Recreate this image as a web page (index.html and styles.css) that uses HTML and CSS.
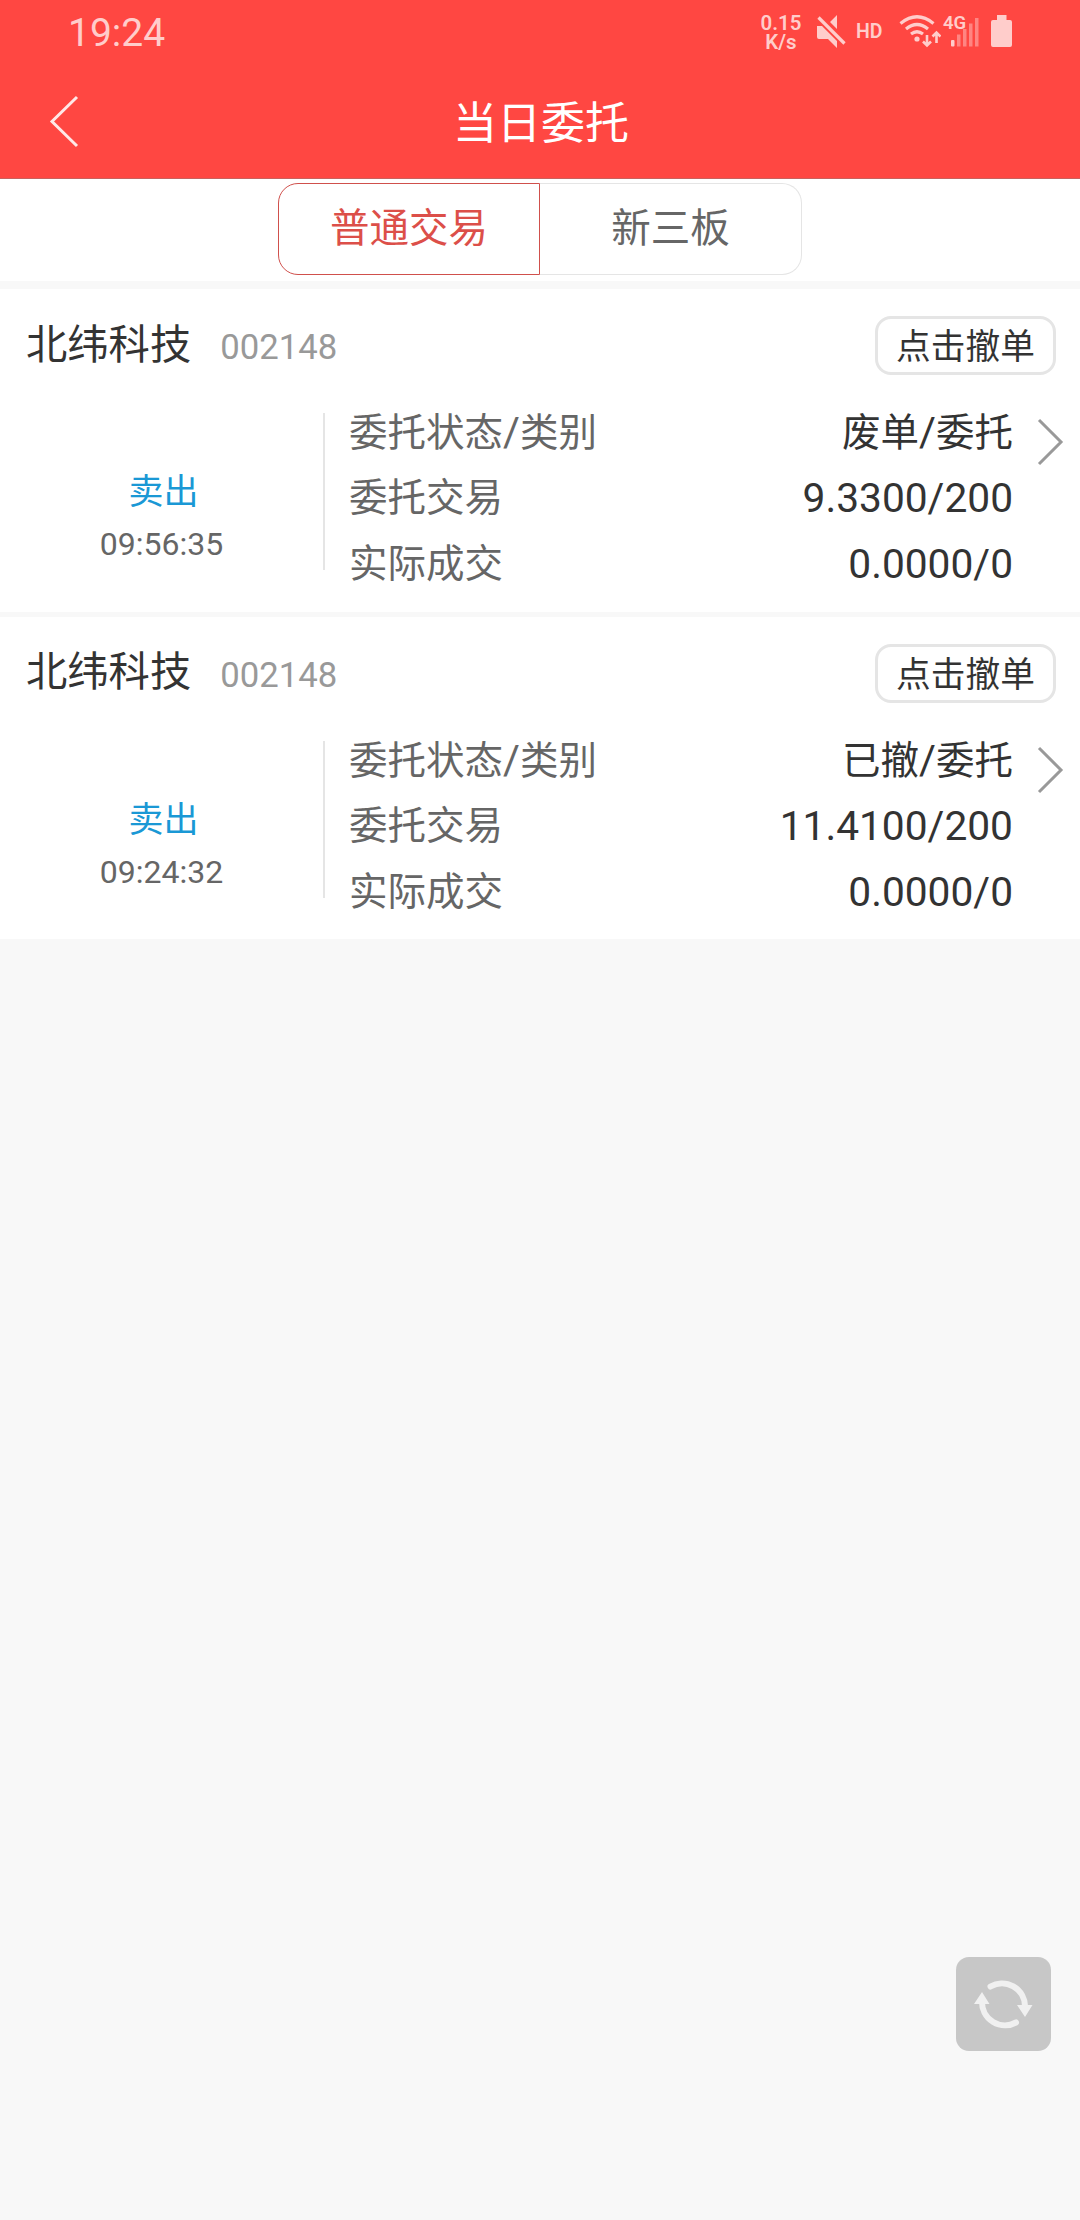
FILE: index.html
```html
<!DOCTYPE html>
<html lang="zh-CN">
<head>
  <meta charset="UTF-8">
  <title>当日委托</title>
  <link rel="stylesheet" href="styles.css">
</head>
<body>
  <header class="header">
    <div class="status-bar">
      <span class="clock">19:24</span>
      <div class="status-icons">
        <div class="net-speed">
          <span>0.15</span>
          <span>K/s</span>
        </div>
        <svg class="icon-mute" width="30" height="34" viewBox="0 0 30 34">
          <path d="M1 12h5l15 15v7l-9-9H3q-2 0-2-2z M14 8l7-7v14z"/>
          <path class="line" d="M2.5 3.500L28.500 29.500"/>
        </svg>
        <span class="hd">HD</span>
        <svg class="icon-wifi" width="42" height="34" viewBox="0 0 42 34">
          <path class="line" d="M1.500 9.500Q18 -4 34.500 9.500M7 15Q18 6 29 15M12 20Q18 15.500 24 20"/>
          <circle cx="18" cy="25" r="2.600"/>
          <path class="arrow" d="M28 21v10M24 27.500l4 4 4-4M37.500 29V19M33.500 22.500l4-4 4 4"/>
        </svg>
        <div class="signal">
          <span class="network">4G</span>
          <svg width="37" height="34" viewBox="0 0 37 34">
            <rect x="8" y="26" width="3.500" height="6.500" rx="1"/>
            <path class="dim" d="M14 20.500h3.500v12H14zM20 15h3.500v17.500H20zM26 9.500h3.500v23H26zM32 4h3.500v28.500H32z"/>
          </svg>
        </div>
        <svg class="icon-battery" width="21" height="34" viewBox="0 0 21 34">
          <path d="M6 1h9.500v5H19q2 0 2 2v23q0 2-2 2H2q-2 0-2-2V8q0-2 2-2h4z"/>
        </svg>
      </div>
    </div>
    <div class="nav-bar">
      <svg class="back" width="30" height="54" viewBox="0 0 30 54">
        <path d="M28 2L3 26.500 28 51"/>
      </svg>
      <h1 class="nav-title">当日委托</h1>
    </div>
  </header>

  <div class="tabs">
    <div class="tab active">普通交易</div>
    <div class="tab">新三板</div>
  </div>

  <div class="order-list">
    <div class="order">
      <div class="order-header">
        <span class="stock-name">北纬科技</span>
        <span class="stock-code">002148</span>
        <button class="cancel-btn">点击撤单</button>
      </div>
      <div class="order-body">
        <div class="order-side">
          <div class="side">卖出</div>
          <div class="time">09:56:35</div>
        </div>
        <div class="order-info">
          <div class="row"><span class="label">委托状态<i>/</i>类别</span><span class="value">废单<i>/</i>委托</span></div>
          <div class="row"><span class="label">委托交易</span><span class="value num">9.3300/200</span></div>
          <div class="row"><span class="label">实际成交</span><span class="value num">0.0000/0</span></div>
        </div>
        <svg class="chevron" width="28" height="48" viewBox="0 0 28 48">
          <path d="M2 2l22 22L2 46"/>
        </svg>
      </div>
    </div>

    <div class="order">
      <div class="order-header">
        <span class="stock-name">北纬科技</span>
        <span class="stock-code">002148</span>
        <button class="cancel-btn">点击撤单</button>
      </div>
      <div class="order-body">
        <div class="order-side">
          <div class="side">卖出</div>
          <div class="time">09:24:32</div>
        </div>
        <div class="order-info">
          <div class="row"><span class="label">委托状态<i>/</i>类别</span><span class="value">已撤<i>/</i>委托</span></div>
          <div class="row"><span class="label">委托交易</span><span class="value num">11.4100/200</span></div>
          <div class="row"><span class="label">实际成交</span><span class="value num">0.0000/0</span></div>
        </div>
        <svg class="chevron" width="28" height="48" viewBox="0 0 28 48">
          <path d="M2 2l22 22L2 46"/>
        </svg>
      </div>
    </div>
  </div>

  <div class="refresh-btn">
    <svg width="95" height="94" viewBox="0 0 95 94">
      <path class="arc" d="M34.500 29.500A23 23 0 0 1 69 49M60 65.500A23 23 0 0 1 26 45"/>
      <path class="head" d="M61 48h15.500L69 60zM18 47h15.500L26 35z"/>
    </svg>
  </div>
</body>
</html>
```
FILE: styles.css
```css
* {
  box-sizing: border-box;
}
body {
  margin: 0;
  width: 1080px;
  min-height: 2220px;
  background: #f8f8f8;
  font-family: Roboto, "Noto Sans CJK SC", sans-serif;
  color: #333;
}
svg {
  display: block;
}

/* header */
.header {
  height: 179px;
  background: #ff4742;
  border-bottom: 1px solid #c8625e;
}
.status-bar {
  height: 66px;
  padding: 0 68px;
  display: flex;
  justify-content: space-between;
  color: #ffcdcb;
}
.clock {
  font-size: 39px;
  line-height: 67px;
}
.status-icons {
  display: flex;
  align-items: flex-start;
  padding-top: 14px;
  font-weight: 600;
}
.status-icons svg {
  fill: #ffcdcb;
}
.status-icons .line, .status-icons .arrow {
  fill: none;
  stroke: #ffcdcb;
  stroke-width: 3.2;
}
.status-icons .arrow {
  stroke-width: 2.6;
}
.status-icons .dim {
  fill: #ff8582;
}
.net-speed {
  width: 42px;
  margin-right: 14px;
  display: flex;
  flex-direction: column;
  align-items: center;
  font-size: 20.5px;
  line-height: 19px;
}
.icon-mute {
  margin-right: 10px;
}
.hd {
  width: 27px;
  margin-right: 16px;
  font-size: 19.5px;
  line-height: 35px;
}
.icon-wifi {
  margin-right: 2px;
}
.signal {
  position: relative;
  margin-right: 11px;
}
.network {
  position: absolute;
  left: 0;
  top: 0;
  font-size: 18.5px;
  line-height: 18px;
}
.nav-bar {
  height: 112px;
  padding: 0 49px;
  display: grid;
  grid-template-columns: 30px 1fr 30px;
  align-items: center;
}
.back path {
  fill: none;
  stroke: #ffe8e7;
  stroke-width: 3;
}
.nav-title {
  margin: 0;
  padding: 3px 0 0 2px;
  text-align: center;
  font-size: 44px;
  font-weight: 400;
  line-height: 64px;
  color: #fff;
}

/* tabs */
.tabs {
  height: 102px;
  padding-top: 4px;
  display: flex;
  justify-content: center;
  background: #fff;
}
.tab {
  width: 262px;
  height: 92px;
  border: 1px solid #e5e5e5;
  border-left: none;
  border-radius: 0 20px 20px 0;
  text-align: center;
  font-size: 39.5px;
  line-height: 89px;
  color: #666;
}
.tab.active {
  border: 1px solid #d0504c;
  border-radius: 20px 0 0 20px;
  color: #dc4f49;
}

/* order list */
.order-list {
  margin-top: 8px;
}
.order {
  height: 322.5px;
  padding-top: 27px;
  margin-bottom: 5px;
  background: #fff;
}
.order-header {
  height: 59px;
  padding: 0 24px 0 26px;
  display: flex;
  align-items: center;
}
.stock-name {
  font-size: 41.3px;
  line-height: 56px;
  margin-bottom: 2px;
}
.stock-code {
  margin-left: 29px;
  padding-top: 3px;
  font-size: 34.7px;
  color: #999;
}
.cancel-btn {
  width: 181px;
  height: 59px;
  margin-left: auto;
  padding: 4px 0 0;
  border: 3px solid #e5e5e5;
  border-radius: 16px;
  background: #fff;
  font-family: inherit;
  font-size: 34.7px;
  line-height: 49px;
  color: #333;
}
.order-body {
  padding-top: 24px;
  display: flex;
}
.order-side {
  width: 325px;
  height: 157px;
  margin-top: 14px;
  padding-top: 53px;
  border-right: 2px solid #e5e5e5;
  text-align: center;
}
.side {
  font-size: 35px;
  line-height: 54px;
  padding-left: 4px;
  color: #1a98d5;
}
.time {
  font-size: 32px;
  line-height: 48px;
  color: #666;
}
.order-info {
  width: 664px;
  margin-left: 24px;
}
.row {
  height: 66px;
  display: flex;
  justify-content: space-between;
  font-size: 38.5px;
  line-height: 66px;
}
.label {
  color: #666;
}
.row i {
  font-size: 41px;
  font-style: normal;
}
.num {
  font-size: 40.7px;
}
.chevron {
  margin: 19px 0 0 24px;
}
.chevron path {
  fill: none;
  stroke: #999;
  stroke-width: 3;
}

/* floating refresh button */
.refresh-btn {
  position: fixed;
  left: 956px;
  top: 1957px;
  width: 95px;
  height: 94px;
  border-radius: 13px;
  background: #c7c7c7;
}
.refresh-btn .arc {
  fill: none;
  stroke: #f0f0f0;
  stroke-width: 6;
  stroke-linecap: round;
}
.refresh-btn .head {
  fill: #f0f0f0;
}
```
